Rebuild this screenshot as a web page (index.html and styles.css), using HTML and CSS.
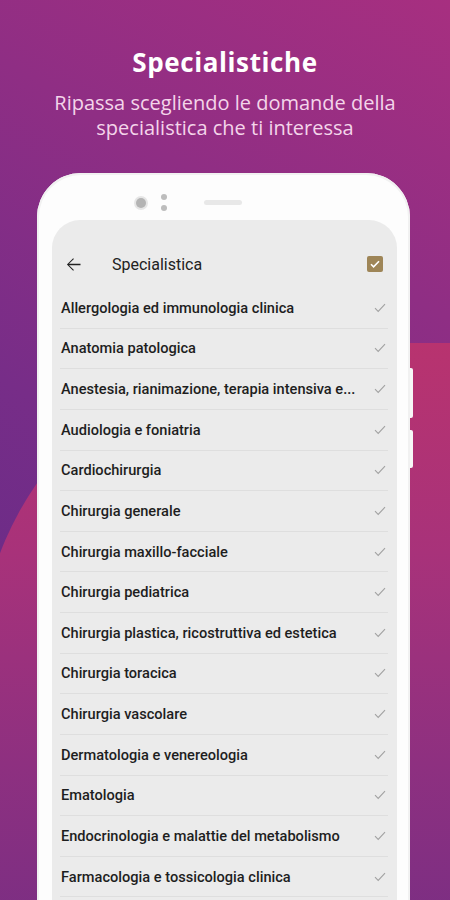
FILE: index.html
```html
<!DOCTYPE html>
<html>
  <head>
    <meta charset="utf-8">
    <meta name="viewport" content="width=device-width, initial-scale=1.0">
    <title>Specialistiche</title>
    <link rel="stylesheet" href="styles.css">
  </head>
  <body>
    <main class="promo">
      <header class="promo-head">
        <h1>Specialistiche</h1>
        <p>Ripassa scegliendo le domande della<br>specialistica che ti interessa</p>
      </header>

      <div class="phone">
        <div class="phone-top">
          <span class="camera"></span>
          <span class="sensors"><i></i><i></i></span>
          <span class="speaker"></span>
        </div>

        <div class="screen">
          <div class="toolbar">
            <svg class="back" viewBox="0 0 24 24" width="21" height="21">
              <path d="M20 11.25H6.9l5.6-5.6-.9-.9L4.5 12l7.1 7.25.9-.9-5.6-5.6H20z" fill="#222"/>
            </svg>
            <span class="toolbar-title">Specialistica</span>
            <span class="flex"></span>
            <span class="checkbox">
              <svg viewBox="0 0 16 16" width="16" height="16">
                <path d="M4 8.2l2.6 2.6L12 5.2" fill="none" stroke="#fff" stroke-width="1.6"/>
              </svg>
            </span>
          </div>

          <ul class="list">
            <li><span class="label">Allergologia ed immunologia clinica</span><svg class="tick" viewBox="0 0 12 10" width="12" height="10"><path d="M1 5.2l3.2 3.2L11 1.2"/></svg></li>
            <li><span class="label">Anatomia patologica</span><svg class="tick" viewBox="0 0 12 10" width="12" height="10"><path d="M1 5.2l3.2 3.2L11 1.2"/></svg></li>
            <li><span class="label">Anestesia, rianimazione, terapia intensiva e...</span><svg class="tick" viewBox="0 0 12 10" width="12" height="10"><path d="M1 5.2l3.2 3.2L11 1.2"/></svg></li>
            <li><span class="label">Audiologia e foniatria</span><svg class="tick" viewBox="0 0 12 10" width="12" height="10"><path d="M1 5.2l3.2 3.2L11 1.2"/></svg></li>
            <li><span class="label">Cardiochirurgia</span><svg class="tick" viewBox="0 0 12 10" width="12" height="10"><path d="M1 5.2l3.2 3.2L11 1.2"/></svg></li>
            <li><span class="label">Chirurgia generale</span><svg class="tick" viewBox="0 0 12 10" width="12" height="10"><path d="M1 5.2l3.2 3.2L11 1.2"/></svg></li>
            <li><span class="label">Chirurgia maxillo-facciale</span><svg class="tick" viewBox="0 0 12 10" width="12" height="10"><path d="M1 5.2l3.2 3.2L11 1.2"/></svg></li>
            <li><span class="label">Chirurgia pediatrica</span><svg class="tick" viewBox="0 0 12 10" width="12" height="10"><path d="M1 5.2l3.2 3.2L11 1.2"/></svg></li>
            <li><span class="label">Chirurgia plastica, ricostruttiva ed estetica</span><svg class="tick" viewBox="0 0 12 10" width="12" height="10"><path d="M1 5.2l3.2 3.2L11 1.2"/></svg></li>
            <li><span class="label">Chirurgia toracica</span><svg class="tick" viewBox="0 0 12 10" width="12" height="10"><path d="M1 5.2l3.2 3.2L11 1.2"/></svg></li>
            <li><span class="label">Chirurgia vascolare</span><svg class="tick" viewBox="0 0 12 10" width="12" height="10"><path d="M1 5.2l3.2 3.2L11 1.2"/></svg></li>
            <li><span class="label">Dermatologia e venereologia</span><svg class="tick" viewBox="0 0 12 10" width="12" height="10"><path d="M1 5.2l3.2 3.2L11 1.2"/></svg></li>
            <li><span class="label">Ematologia</span><svg class="tick" viewBox="0 0 12 10" width="12" height="10"><path d="M1 5.2l3.2 3.2L11 1.2"/></svg></li>
            <li><span class="label">Endocrinologia e malattie del metabolismo</span><svg class="tick" viewBox="0 0 12 10" width="12" height="10"><path d="M1 5.2l3.2 3.2L11 1.2"/></svg></li>
            <li><span class="label">Farmacologia e tossicologia clinica</span><svg class="tick" viewBox="0 0 12 10" width="12" height="10"><path d="M1 5.2l3.2 3.2L11 1.2"/></svg></li>
          </ul>
        </div>
      </div>
    </main>
  </body>
</html>
```

FILE: styles.css
```css
body, html {
  height: 100%;
  width: 100%;
  overflow: hidden;
  margin: 0;
}
h1, p, ul {
  margin: 0;
  padding: 0;
}
.promo {
  position: relative;
  width: 100%;
  height: 100%;
  overflow: hidden;
  background: linear-gradient(30deg, #5b2a86 0%, #772d88 45%, #a72f80 100%);
}
/* pink shape behind the phone */
.promo::before {
  content: "";
  position: absolute;
  left: -20px;
  top: 343px;
  width: 620px;
  height: 700px;
  border-top-left-radius: 330px 320px;
  background: linear-gradient(180deg, #b8336f 0%, #a8327a 30%, #8e3080 60%, #6e2d85 100%);
}
.promo-head, .phone {
  position: relative;
  z-index: 1;
}
.promo-head {
  display: flex;
  flex-direction: column;
  align-items: center;
  padding-top: 46px;
  text-align: center;
}
.promo-head h1 {
  font-family: "Open Sans", sans-serif;
  font-weight: 700;
  font-size: 26px;
  line-height: 32px;
  letter-spacing: 0.6px;
  color: #fff;
}
.promo-head p {
  margin-top: 12px;
  font-family: "Open Sans", sans-serif;
  font-size: 20px;
  line-height: 25px;
  color: #f4d5ea;
}
.phone {
  margin: 33px 0 0 37px;
  width: 373px;
  height: 760px;
  box-sizing: border-box;
  padding: 0 13px 0 15px;
  background: #fdfdfd;
  border-radius: 44px 44px 0 0;
  box-shadow: inset 0 0 0 2px #f1f1f1;
}
.phone::before, .phone::after {
  content: "";
  position: absolute;
  right: -3px;
  width: 3px;
  background: #f7f7f7;
  border-radius: 0 2px 2px 0;
}
.phone::before {
  top: 195px;
  height: 50px;
}
.phone::after {
  top: 257px;
  height: 38px;
}
.phone-top {
  display: flex;
  align-items: center;
  height: 47px;
  box-sizing: border-box;
  padding: 12px 0 0 84px;
}
.camera {
  width: 10px;
  height: 10px;
  border-radius: 50%;
  background: #b4b4b4;
  box-shadow: 0 0 0 2px #e6e6e6;
}
.sensors {
  display: flex;
  flex-direction: column;
  gap: 5px;
  margin-left: 15px;
}
.sensors i {
  display: block;
  width: 6px;
  height: 6px;
  border-radius: 50%;
  background: #bdbdbd;
}
.speaker {
  margin-left: 37px;
  width: 38px;
  height: 5px;
  border-radius: 3px;
  background: #e8e8e8;
}
.screen {
  height: 700px;
  background: #ebebeb;
  border-radius: 28px 28px 0 0;
  overflow: hidden;
}
.toolbar {
  display: flex;
  align-items: center;
  height: 48px;
  margin-top: 20px;
  padding: 0 14px 0 11px;
}
.back {
  display: block;
}
.toolbar-title {
  margin-left: 28px;
  font-family: Roboto, sans-serif;
  font-size: 16px;
  color: #222;
}
.flex {
  flex: 1;
}
.checkbox {
  display: flex;
  width: 16px;
  height: 16px;
  border-radius: 2px;
  background: #9e8557;
}
.list {
  list-style: none;
  margin: 0 9px 0 8px;
}
.list li {
  display: flex;
  align-items: center;
  height: 40.64px;
  box-sizing: border-box;
  border-bottom: 1px solid #dedede;
  padding: 0 2px 0 1px;
}
.label {
  flex: 1;
  min-width: 0;
  white-space: nowrap;
  font-family: Roboto, sans-serif;
  font-weight: 500;
  font-size: 14.6px;
  color: #1e1e1e;
}
.tick {
  flex: none;
  fill: none;
  stroke: #a2a2a2;
  stroke-width: 1.1;
}
```
